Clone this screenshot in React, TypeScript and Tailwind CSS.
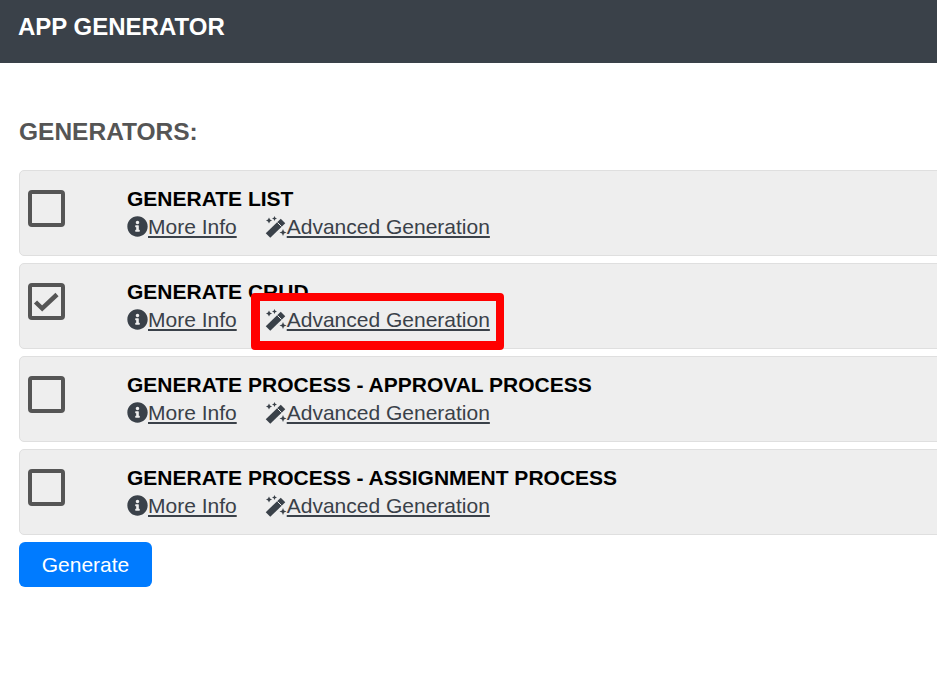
import React from 'react';
import { FaInfoCircle } from 'react-icons/fa';

const generators = [
  { title: 'GENERATE LIST', checked: false },
  { title: 'GENERATE CRUD', checked: true },
  { title: 'GENERATE PROCESS - APPROVAL PROCESS', checked: false },
  { title: 'GENERATE PROCESS - ASSIGNMENT PROCESS', checked: false },
];

// wand with sparkles, closer to the reference than the package icon
function WandIcon() {
  return (
    <svg viewBox="0 0 22 22" className="ml-[28px] h-[22px] w-[22px] shrink-0" fill="currentColor">
      <path d="M3 19.5 L18 5" stroke="currentColor" strokeWidth="6.5" />
      <path d="M12.5 6.5 L16.5 10.5" stroke="#eeeeee" strokeWidth="1" />
      <path d="M4 1.5 L5 3.5 L7 4.5 L5 5.5 L4 7.5 L3 5.5 L1 4.5 L3 3.5 Z" />
      <path d="M9.5 0 L10.3 1.7 L12 2.5 L10.3 3.3 L9.5 5 L8.7 3.3 L7 2.5 L8.7 1.7 Z" />
      <path d="M18 13 L19 15.5 L21.5 16.5 L19 17.5 L18 20 L17 17.5 L14.5 16.5 L17 15.5 Z" />
    </svg>
  );
}

function GeneratorRow({ title, checked }: { title: string; checked: boolean }) {
  return (
    <div className="relative flex h-[86px] w-[960px] rounded-[5px] border border-[#dfdfdf] bg-[#eeeeee]">
      <div className="w-[107px] pl-[7.5px] pt-[19px]">
        <div className="flex h-[37px] w-[37px] items-center justify-center rounded-[4px] border-[4px] border-[#555555]">
          {checked && (
            <svg viewBox="0 0 29 29" className="h-[29px] w-[29px]" fill="none">
              <path d="M3.5 15 L10.2 21.5 L25 7.5" stroke="#555555" strokeWidth="4.5" />
            </svg>
          )}
        </div>
      </div>
      <div className="pt-[14px]">
        <div className="text-[21px] leading-[28px] font-bold text-black">{title}</div>
        <div className="flex h-[27px] items-center text-[21px] text-[#3a4149]">
          <FaInfoCircle className="text-[21px]" />
          <a className="underline" href="#">More Info</a>
          <WandIcon />
          <a className="underline" href="#">Advanced Generation</a>
        </div>
      </div>
      {checked && (
        <div className="absolute top-[29px] left-[231px] h-[57px] w-[253px] rounded-[4px] border-t-[8px] border-r-[8px] border-b-[9px] border-l-[9px] border-[#ff0000]" />
      )}
    </div>
  );
}

export default function App() {
  return (
    <div className="h-[677px] w-[937px] overflow-hidden bg-white font-['Liberation_Sans',Arial,sans-serif]">
      <header className="h-[63px] bg-[#3a4149] pl-[18px] pt-[12px] text-[24px] leading-[30px] font-bold text-white">
        APP GENERATOR
      </header>
      <main className="pl-[19px]">
        <h2 className="mt-[53px] mb-[23px] text-[24.5px] leading-[31px] font-bold text-[#555555]">GENERATORS:</h2>
        <div className="flex flex-col gap-[7px]">
          {generators.map((g) => (
            <GeneratorRow key={g.title} title={g.title} checked={g.checked} />
          ))}
        </div>
        <button className="mt-[7px] h-[45px] w-[133px] rounded-[6px] bg-[#007bff] text-[21px] text-white">
          Generate
        </button>
      </main>
    </div>
  );
}
